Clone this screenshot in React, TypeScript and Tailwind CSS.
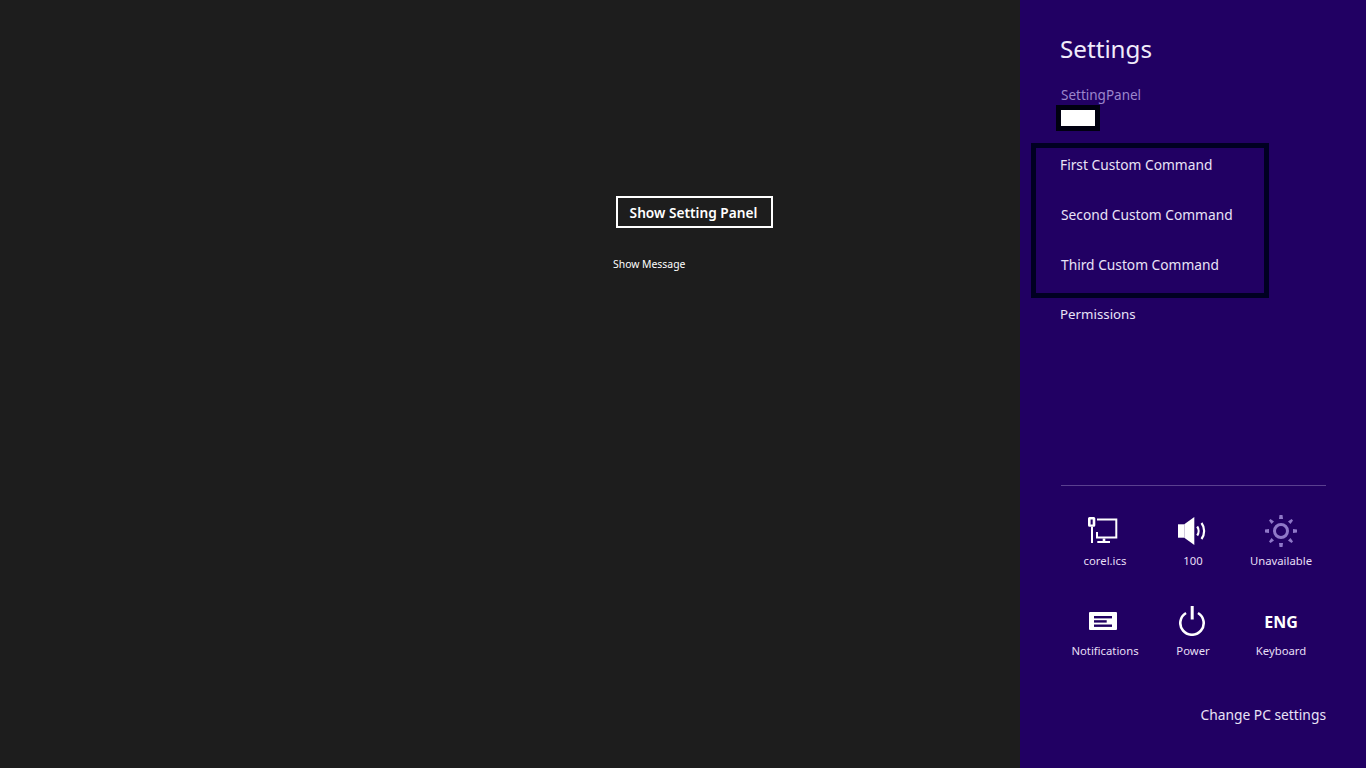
const font = { fontFamily: '"Noto Sans", "Open Sans", sans-serif' };

function NetworkIcon() {
  return (
    <svg width="34" height="28" viewBox="0 0 34 28" fill="#fff">
      <path fillRule="evenodd" d="M1.5 0H5.8A1.5 1.5 0 0 1 7.3 1.5V8.2A1.5 1.5 0 0 1 5.8 9.7H1.5A1.5 1.5 0 0 1 0 8.2V1.5A1.5 1.5 0 0 1 1.5 0ZM2.6 2.4V7.4H4.7V2.4Z" />
      <rect x="3" y="9.7" width="2" height="16.3" />
      <path d="M9 1.5H29.3V21.5H8V15H10V19.5H27.3V3.5H9Z" />
      <rect x="14.7" y="21.5" width="2.6" height="3" />
      <rect x="9.3" y="24" width="12.7" height="2" />
    </svg>
  );
}

function VolumeIcon() {
  return (
    <svg width="30" height="28" viewBox="0 0 30 28" fill="none">
      <rect x="0" y="7.3" width="6.3" height="13.4" fill="#fff" />
      <path d="M6.3 7.3L16.3 0V28L6.3 20.7Z" fill="#fff" />
      <path d="M19.2 9.5C21 12 21 16 19.2 18.5" stroke="#fff" strokeWidth="2.2" />
      <path d="M23.5 6C27 10.5 27 17.5 23.5 22" stroke="#fff" strokeWidth="2.2" />
    </svg>
  );
}

function BrightnessIcon() {
  return (
    <svg width="32" height="32" viewBox="0 0 32 32" fill="#8f78c8">
      <circle cx="16" cy="16" r="6.5" fill="none" stroke="#8f78c8" strokeWidth="3" />
      <path d="M14.5 0H17.5L18 4H14Z" />
      <path d="M14.5 32H17.5L18 28H14Z" />
      <path d="M0 14.5V17.5L4 18V14Z" />
      <path d="M32 14.5V17.5L28 18V14Z" />
      <path d="M4 5.5L5.5 4L9 6.5L6.5 9Z" />
      <path d="M28 5.5L26.5 4L23 6.5L25.5 9Z" />
      <path d="M4 26.5L5.5 28L9 25.5L6.5 23Z" />
      <path d="M28 26.5L26.5 28L23 25.5L25.5 23Z" />
    </svg>
  );
}

function NotificationsIcon() {
  return (
    <svg width="32" height="18" viewBox="0 0 32 18">
      <rect width="28" height="18" rx="1" fill="#fff" />
      <rect x="5" y="4" width="18" height="2.4" fill="#210063" />
      <rect x="5" y="8.2" width="12.7" height="2.4" fill="#210063" />
      <rect x="5" y="12.5" width="18" height="2.4" fill="#210063" />
    </svg>
  );
}

function PowerIcon() {
  return (
    <svg width="28" height="30" viewBox="0 0 28 30" fill="none">
      <path d="M7 7A11.7 11.7 0 1 0 19 7" stroke="#fff" strokeWidth="2.6" />
      <rect x="11.7" y="0" width="3" height="13.5" fill="#fff" />
    </svg>
  );
}

function Tile({ icon, label }: { icon: React.ReactNode; label: string }) {
  return (
    <div className="w-[88px] flex flex-col items-center">
      <div className="h-[36px] flex items-center justify-center">{icon}</div>
      <span className="mt-[4px] text-[11.3px] leading-[16px] text-[#e6dff5] whitespace-nowrap">{label}</span>
    </div>
  );
}

export default function App() {
  const commands = ['First Custom Command', 'Second Custom Command', 'Third Custom Command'];

  return (
    <div className="h-screen w-full flex overflow-hidden bg-[#1d1d1d]" style={font}>
      <div className="flex-1 pt-[196px] pl-[613px]">
        <button className="ml-[3px] w-[157px] h-[32px] border-2 border-white pt-[2px] pr-[2px] text-white text-[13.7px] font-semibold flex items-center justify-center whitespace-nowrap">
          Show Setting Panel
        </button>
        <div className="mt-[28px] text-[10.4px] leading-[16px] text-white">Show Message</div>
      </div>

      <div className="w-[346px] h-full bg-[#210063] flex flex-col">
        <h1 className="ml-[40px] mt-[31px] text-[24.2px] leading-[36px] text-[#f0ebfa]">Settings</h1>
        <div className="ml-[41px] mt-[18px] text-[13.5px] leading-[20px] text-[#9c86cc]">SettingPanel</div>
        <div className="ml-[36px] w-[44px] h-[26px] border-[5px] border-[#000010] bg-white" />

        <div className="ml-[11px] mt-[12px] w-[238px] h-[155px] border-[5px] border-[#000022] pt-[7px] flex flex-col gap-[30px]">
          {commands.map((c, i) => (
            <div key={c} className={`h-[20px] flex items-center text-[13.75px] text-[#e9e3f7] ${i === 0 ? 'pl-[24px]' : 'pl-[25px]'}`}>
              {c}
            </div>
          ))}
        </div>
        <div className="ml-[40px] text-[13.3px] leading-[32px] text-[#e9e3f7]">Permissions</div>

        <div className="mt-auto ml-[41px] mr-[40px] border-t border-[#5a4090]" />
        <div className="ml-[41px] mr-[40px] mt-[27px] flex flex-col gap-[34px]">
          <div className="flex">
            <Tile icon={<NetworkIcon />} label="corel.ics" />
            <Tile icon={<VolumeIcon />} label="100" />
            <Tile icon={<BrightnessIcon />} label="Unavailable" />
          </div>
          <div className="flex">
            <Tile icon={<NotificationsIcon />} label="Notifications" />
            <Tile icon={<PowerIcon />} label="Power" />
            <Tile icon={<span className="mt-[2px] text-[16px] font-bold text-white">ENG</span>} label="Keyboard" />
          </div>
        </div>
        <div className="mr-[40px] mt-[46px] mb-[43px] text-right text-[13.8px] leading-[20px] text-[#e9e3f7]">Change PC settings</div>
      </div>
    </div>
  );
}
